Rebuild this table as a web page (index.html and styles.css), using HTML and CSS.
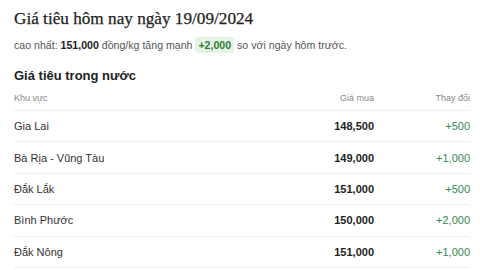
FILE: index.html
```html
<!DOCTYPE html>
<html lang="vi">
<head>
<meta charset="utf-8">
<link rel="stylesheet" href="styles.css">
</head>
<body>
<div class="page">
  <h1 class="title">Giá tiêu hôm nay ngày 19/09/2024</h1>
  <p class="summary">cao nhất: <b>151,000</b> đồng/kg tăng mạnh <span class="badge">+2,000</span> so với ngày hôm trước.</p>
  <h2 class="section">Giá tiêu trong nước</h2>
  <table class="prices">
    <thead>
      <tr><th class="region">Khu vực</th><th class="num">Giá mua</th><th class="chg">Thay đổi</th></tr>
    </thead>
    <tbody>
      <tr><td class="region">Gia Lai</td><td class="num">148,500</td><td class="chg">+500</td></tr>
      <tr><td class="region">Bà Rịa - Vũng Tàu</td><td class="num">149,000</td><td class="chg">+1,000</td></tr>
      <tr><td class="region">Đắk Lắk</td><td class="num">151,000</td><td class="chg">+500</td></tr>
      <tr><td class="region">Bình Phước</td><td class="num">150,000</td><td class="chg">+2,000</td></tr>
      <tr><td class="region">Đắk Nông</td><td class="num">151,000</td><td class="chg">+1,000</td></tr>
    </tbody>
  </table>
</div>
</body>
</html>
```

FILE: styles.css
```css
html, body { margin: 0; padding: 0; background: #fff; }
body { font-family: "Liberation Sans", Arial, sans-serif; color: #222; }
.page { padding: 7px 10px 0 14px; }
.title {
  margin: 0;
  font-family: "Liberation Serif", "Times New Roman", serif;
  font-weight: 400;
  font-size: 17.2px;
  line-height: 24px;
  color: #222;
  -webkit-text-stroke: 0.25px #222;
}
.summary {
  margin: 5px 0 0;
  font-size: 10.6px;
  line-height: 18px;
  color: #555;
}
.summary b { color: #222; }
.badge {
  display: inline-block;
  background: #e6f4e8;
  color: #2e7d32;
  font-weight: 700;
  padding: 0 3px;
  border-radius: 3px;
  line-height: 16px;
}
.section {
  margin: 13px 0 0;
  font-size: 13px;
  line-height: 18px;
  font-weight: 700;
  color: #222;
}
.prices {
  width: 456px;
  border-collapse: collapse;
  margin-top: 1px;
}
.prices th {
  font-size: 9px;
  font-weight: 400;
  color: #888;
  height: 24px;
  padding: 0;
  border-bottom: 1px solid #eee;
}
.prices td {
  font-size: 11px;
  height: 30.4px;
  padding: 0;
  border-bottom: 1px solid #eee;
  color: #333;
}
.region { text-align: left; }
.num { text-align: right; width: 150px; }
.chg { text-align: right; width: 96px; }
td.num { font-weight: 700; color: #222; }
td.chg { color: #3a8a50; }
```
